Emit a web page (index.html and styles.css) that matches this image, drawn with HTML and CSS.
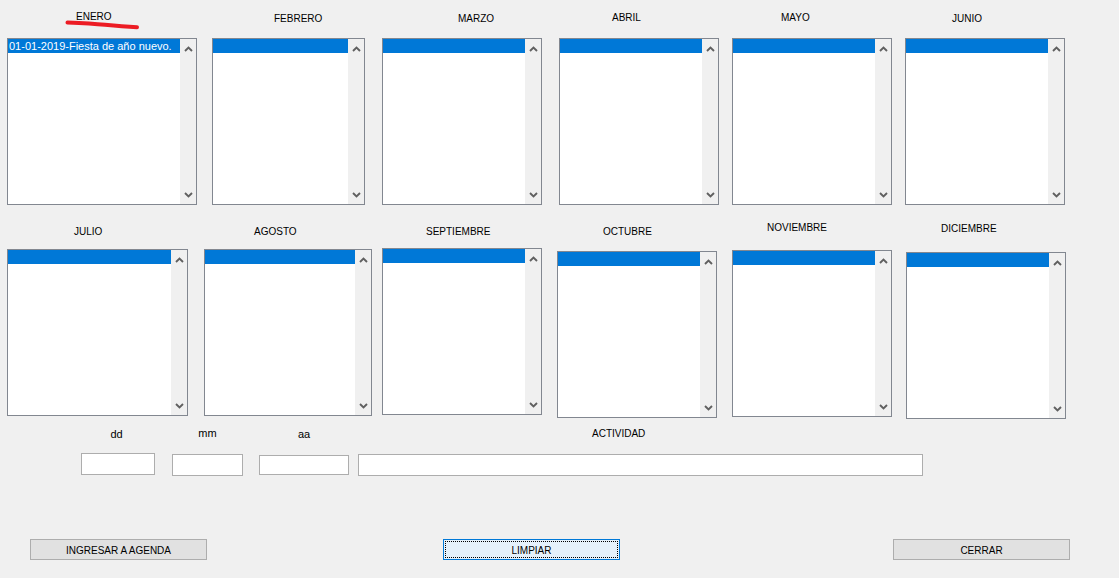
FILE: index.html
```html
<!DOCTYPE html>
<html lang="es">
<head>
<meta charset="utf-8">
<title>Agenda</title>
<link rel="stylesheet" href="styles.css">
</head>
<body>
<div class="app">
  <div class="row row1">
    <div class="month ene">
      <div class="label">ENERO</div>
      <div class="list">
        <div class="items"><div class="sel">01-01-2019-Fiesta de año nuevo.</div></div>
        <div class="scroll">
          <svg class="arr" viewBox="0 0 9 6" width="9" height="6"><polyline points="1,5 4.5,1.5 8,5"/></svg>
          <svg class="arr" viewBox="0 0 9 6" width="9" height="6"><polyline points="1,1 4.5,4.5 8,1"/></svg>
        </div>
      </div>
    </div>
    <div class="month feb">
      <div class="label">FEBRERO</div>
      <div class="list">
        <div class="items"><div class="sel"></div></div>
        <div class="scroll">
          <svg class="arr" viewBox="0 0 9 6" width="9" height="6"><polyline points="1,5 4.5,1.5 8,5"/></svg>
          <svg class="arr" viewBox="0 0 9 6" width="9" height="6"><polyline points="1,1 4.5,4.5 8,1"/></svg>
        </div>
      </div>
    </div>
    <div class="month mar">
      <div class="label">MARZO</div>
      <div class="list">
        <div class="items"><div class="sel"></div></div>
        <div class="scroll">
          <svg class="arr" viewBox="0 0 9 6" width="9" height="6"><polyline points="1,5 4.5,1.5 8,5"/></svg>
          <svg class="arr" viewBox="0 0 9 6" width="9" height="6"><polyline points="1,1 4.5,4.5 8,1"/></svg>
        </div>
      </div>
    </div>
    <div class="month abr">
      <div class="label">ABRIL</div>
      <div class="list">
        <div class="items"><div class="sel"></div></div>
        <div class="scroll">
          <svg class="arr" viewBox="0 0 9 6" width="9" height="6"><polyline points="1,5 4.5,1.5 8,5"/></svg>
          <svg class="arr" viewBox="0 0 9 6" width="9" height="6"><polyline points="1,1 4.5,4.5 8,1"/></svg>
        </div>
      </div>
    </div>
    <div class="month may">
      <div class="label">MAYO</div>
      <div class="list">
        <div class="items"><div class="sel"></div></div>
        <div class="scroll">
          <svg class="arr" viewBox="0 0 9 6" width="9" height="6"><polyline points="1,5 4.5,1.5 8,5"/></svg>
          <svg class="arr" viewBox="0 0 9 6" width="9" height="6"><polyline points="1,1 4.5,4.5 8,1"/></svg>
        </div>
      </div>
    </div>
    <div class="month jun">
      <div class="label">JUNIO</div>
      <div class="list">
        <div class="items"><div class="sel"></div></div>
        <div class="scroll">
          <svg class="arr" viewBox="0 0 9 6" width="9" height="6"><polyline points="1,5 4.5,1.5 8,5"/></svg>
          <svg class="arr" viewBox="0 0 9 6" width="9" height="6"><polyline points="1,1 4.5,4.5 8,1"/></svg>
        </div>
      </div>
    </div>
  </div>

  <div class="row row2">
    <div class="month jul">
      <div class="label">JULIO</div>
      <div class="list">
        <div class="items"><div class="sel"></div></div>
        <div class="scroll">
          <svg class="arr" viewBox="0 0 9 6" width="9" height="6"><polyline points="1,5 4.5,1.5 8,5"/></svg>
          <svg class="arr" viewBox="0 0 9 6" width="9" height="6"><polyline points="1,1 4.5,4.5 8,1"/></svg>
        </div>
      </div>
    </div>
    <div class="month ago">
      <div class="label">AGOSTO</div>
      <div class="list">
        <div class="items"><div class="sel"></div></div>
        <div class="scroll">
          <svg class="arr" viewBox="0 0 9 6" width="9" height="6"><polyline points="1,5 4.5,1.5 8,5"/></svg>
          <svg class="arr" viewBox="0 0 9 6" width="9" height="6"><polyline points="1,1 4.5,4.5 8,1"/></svg>
        </div>
      </div>
    </div>
    <div class="month sep">
      <div class="label">SEPTIEMBRE</div>
      <div class="list">
        <div class="items"><div class="sel"></div></div>
        <div class="scroll">
          <svg class="arr" viewBox="0 0 9 6" width="9" height="6"><polyline points="1,5 4.5,1.5 8,5"/></svg>
          <svg class="arr" viewBox="0 0 9 6" width="9" height="6"><polyline points="1,1 4.5,4.5 8,1"/></svg>
        </div>
      </div>
    </div>
    <div class="month oct">
      <div class="label">OCTUBRE</div>
      <div class="list">
        <div class="items"><div class="sel"></div></div>
        <div class="scroll">
          <svg class="arr" viewBox="0 0 9 6" width="9" height="6"><polyline points="1,5 4.5,1.5 8,5"/></svg>
          <svg class="arr" viewBox="0 0 9 6" width="9" height="6"><polyline points="1,1 4.5,4.5 8,1"/></svg>
        </div>
      </div>
    </div>
    <div class="month nov">
      <div class="label">NOVIEMBRE</div>
      <div class="list">
        <div class="items"><div class="sel"></div></div>
        <div class="scroll">
          <svg class="arr" viewBox="0 0 9 6" width="9" height="6"><polyline points="1,5 4.5,1.5 8,5"/></svg>
          <svg class="arr" viewBox="0 0 9 6" width="9" height="6"><polyline points="1,1 4.5,4.5 8,1"/></svg>
        </div>
      </div>
    </div>
    <div class="month dic">
      <div class="label">DICIEMBRE</div>
      <div class="list">
        <div class="items"><div class="sel"></div></div>
        <div class="scroll">
          <svg class="arr" viewBox="0 0 9 6" width="9" height="6"><polyline points="1,5 4.5,1.5 8,5"/></svg>
          <svg class="arr" viewBox="0 0 9 6" width="9" height="6"><polyline points="1,1 4.5,4.5 8,1"/></svg>
        </div>
      </div>
    </div>
  </div>

  <div class="row fields">
    <div class="field f-dd">
      <div class="flabel">dd</div>
      <div class="input"></div>
    </div>
    <div class="field f-mm">
      <div class="flabel">mm</div>
      <div class="input"></div>
    </div>
    <div class="field f-aa">
      <div class="flabel">aa</div>
      <div class="input"></div>
    </div>
    <div class="field f-act">
      <div class="flabel upper">ACTIVIDAD</div>
      <div class="input"></div>
    </div>
  </div>

  <div class="row buttons">
    <div class="btn b-ing">INGRESAR A AGENDA</div>
    <div class="btn b-lim focus">LIMPIAR</div>
    <div class="btn b-cer">CERRAR</div>
  </div>

  <svg class="mark" width="160" height="40" viewBox="0 0 160 40">
    <path d="M67.5 22.5 C 80 23, 95 23.8, 105 24.8 S 128 26.8, 137 27.2" />
  </svg>
</div>
</body>
</html>
```

FILE: styles.css
```css
html, body {
  margin: 0;
  padding: 0;
  background: #f0f0f0;
}
.app {
  position: relative;
  width: 1119px;
  height: 578px;
  overflow: hidden;
  background: #f0f0f0;
  font-family: "Liberation Sans", Arial, sans-serif;
  color: #000;
}
.row {
  display: flex;
  align-items: flex-start;
}
.row1 { height: 210px; }
.row2 { height: 212px; }
.fields { height: 55px; }
.buttons { margin-top: 62px; }

.month {
  display: flex;
  flex-direction: column;
  flex: none;
}
.label {
  height: 13px;
  line-height: 13px;
  font-size: 10px;
  white-space: nowrap;
}
.list {
  height: 165px;
  border: 1px solid #828790;
  background: #fff;
  display: flex;
}
.items {
  flex: 1;
  min-width: 0;
}
.sel {
  height: 14px;
  line-height: 14px;
  background: #0078d7;
  color: #fff;
  font-size: 11px;
  padding-left: 1px;
  white-space: nowrap;
  overflow: hidden;
}
.scroll {
  width: 16px;
  background: #f0f0f0;
  display: flex;
  flex-direction: column;
  justify-content: space-between;
  align-items: center;
  padding: 7px 0 6px;
  box-sizing: border-box;
}
.arr polyline {
  fill: none;
  stroke: #606060;
  stroke-width: 1.9;
}

/* row 1 */
.ene { margin-left: 7px; width: 190px; }
.ene .label { margin-top: 10px; padding-left: 69px; }
.ene .list { margin-top: 15px; }
.feb { margin-left: 15px; width: 153px; }
.feb .label { margin-top: 12px; padding-left: 62px; }
.feb .list { margin-top: 13px; }
.mar { margin-left: 17px; width: 160px; }
.mar .label { margin-top: 12px; padding-left: 76px; }
.mar .list { margin-top: 13px; }
.abr { margin-left: 17px; width: 160px; }
.abr .label { margin-top: 11px; padding-left: 53px; }
.abr .list { margin-top: 14px; }
.may { margin-left: 13px; width: 160px; }
.may .label { margin-top: 11px; padding-left: 49px; }
.may .list { margin-top: 14px; }
.jun { margin-left: 13px; width: 160px; }
.jun .label { margin-top: 12px; padding-left: 47px; }
.jun .list { margin-top: 13px; }

/* row 2 */
.jul { margin-left: 7px; width: 181px; }
.jul .label { margin-top: 15px; padding-left: 67px; }
.jul .list { margin-top: 11px; }
.ago { margin-left: 16px; width: 168px; }
.ago .label { margin-top: 15px; padding-left: 50px; }
.ago .list { margin-top: 11px; }
.sep { margin-left: 10px; width: 160px; }
.sep .label { margin-top: 15px; padding-left: 44px; }
.sep .list { margin-top: 10px; }
.oct { margin-left: 15px; width: 160px; }
.oct .label { margin-top: 15px; padding-left: 46px; }
.oct .list { margin-top: 13px; }
.nov { margin-left: 15px; width: 160px; }
.nov .label { margin-top: 11px; padding-left: 35px; }
.nov .list { margin-top: 16px; }
.dic { margin-left: 14px; width: 160px; }
.dic .label { margin-top: 12px; padding-left: 35px; }
.dic .list { margin-top: 17px; }

/* fields */
.field {
  display: flex;
  flex-direction: column;
  flex: none;
}
.flabel {
  height: 13px;
  line-height: 13px;
  font-size: 11px;
  text-align: center;
  margin-top: 6px;
  white-space: nowrap;
}
.flabel.upper {
  font-size: 10px;
  text-align: left;
  padding-left: 234px;
  margin-top: 5px;
}
.input {
  box-sizing: border-box;
  background: #fff;
  border: 1px solid #adadad;
  height: 22px;
}
.f-dd { margin-left: 81px; width: 74px; }
.f-dd .flabel { padding-right: 3px; }
.f-dd .input { margin-top: 12px; }
.f-mm { margin-left: 17px; width: 71px; }
.f-mm .flabel { margin-top: 5px; }
.f-mm .input { margin-top: 14px; }
.f-aa { margin-left: 16px; width: 90px; }
.f-aa .input { margin-top: 14px; height: 20px; }
.f-act { margin-left: 9px; width: 565px; }
.f-act .input { margin-top: 14px; }

/* buttons */
.btn {
  flex: none;
  box-sizing: border-box;
  width: 177px;
  height: 21px;
  line-height: 19px;
  padding-top: 1px;
  border: 1px solid #adadad;
  background: #e1e1e1;
  font-size: 10px;
  text-align: center;
  white-space: nowrap;
}
.btn.focus {
  border-color: #0078d7;
  background: #e5f1fb;
  outline: 1px dotted #000;
  outline-offset: -3px;
}
.b-ing { margin-left: 30px; }
.b-lim { margin-left: 236px; }
.b-cer { margin-left: 273px; }

/* hand-drawn annotation */
.mark {
  position: absolute;
  left: 0;
  top: 0;
}
.mark path {
  fill: none;
  stroke: #ec1c24;
  stroke-width: 4;
  stroke-linecap: round;
}
```
